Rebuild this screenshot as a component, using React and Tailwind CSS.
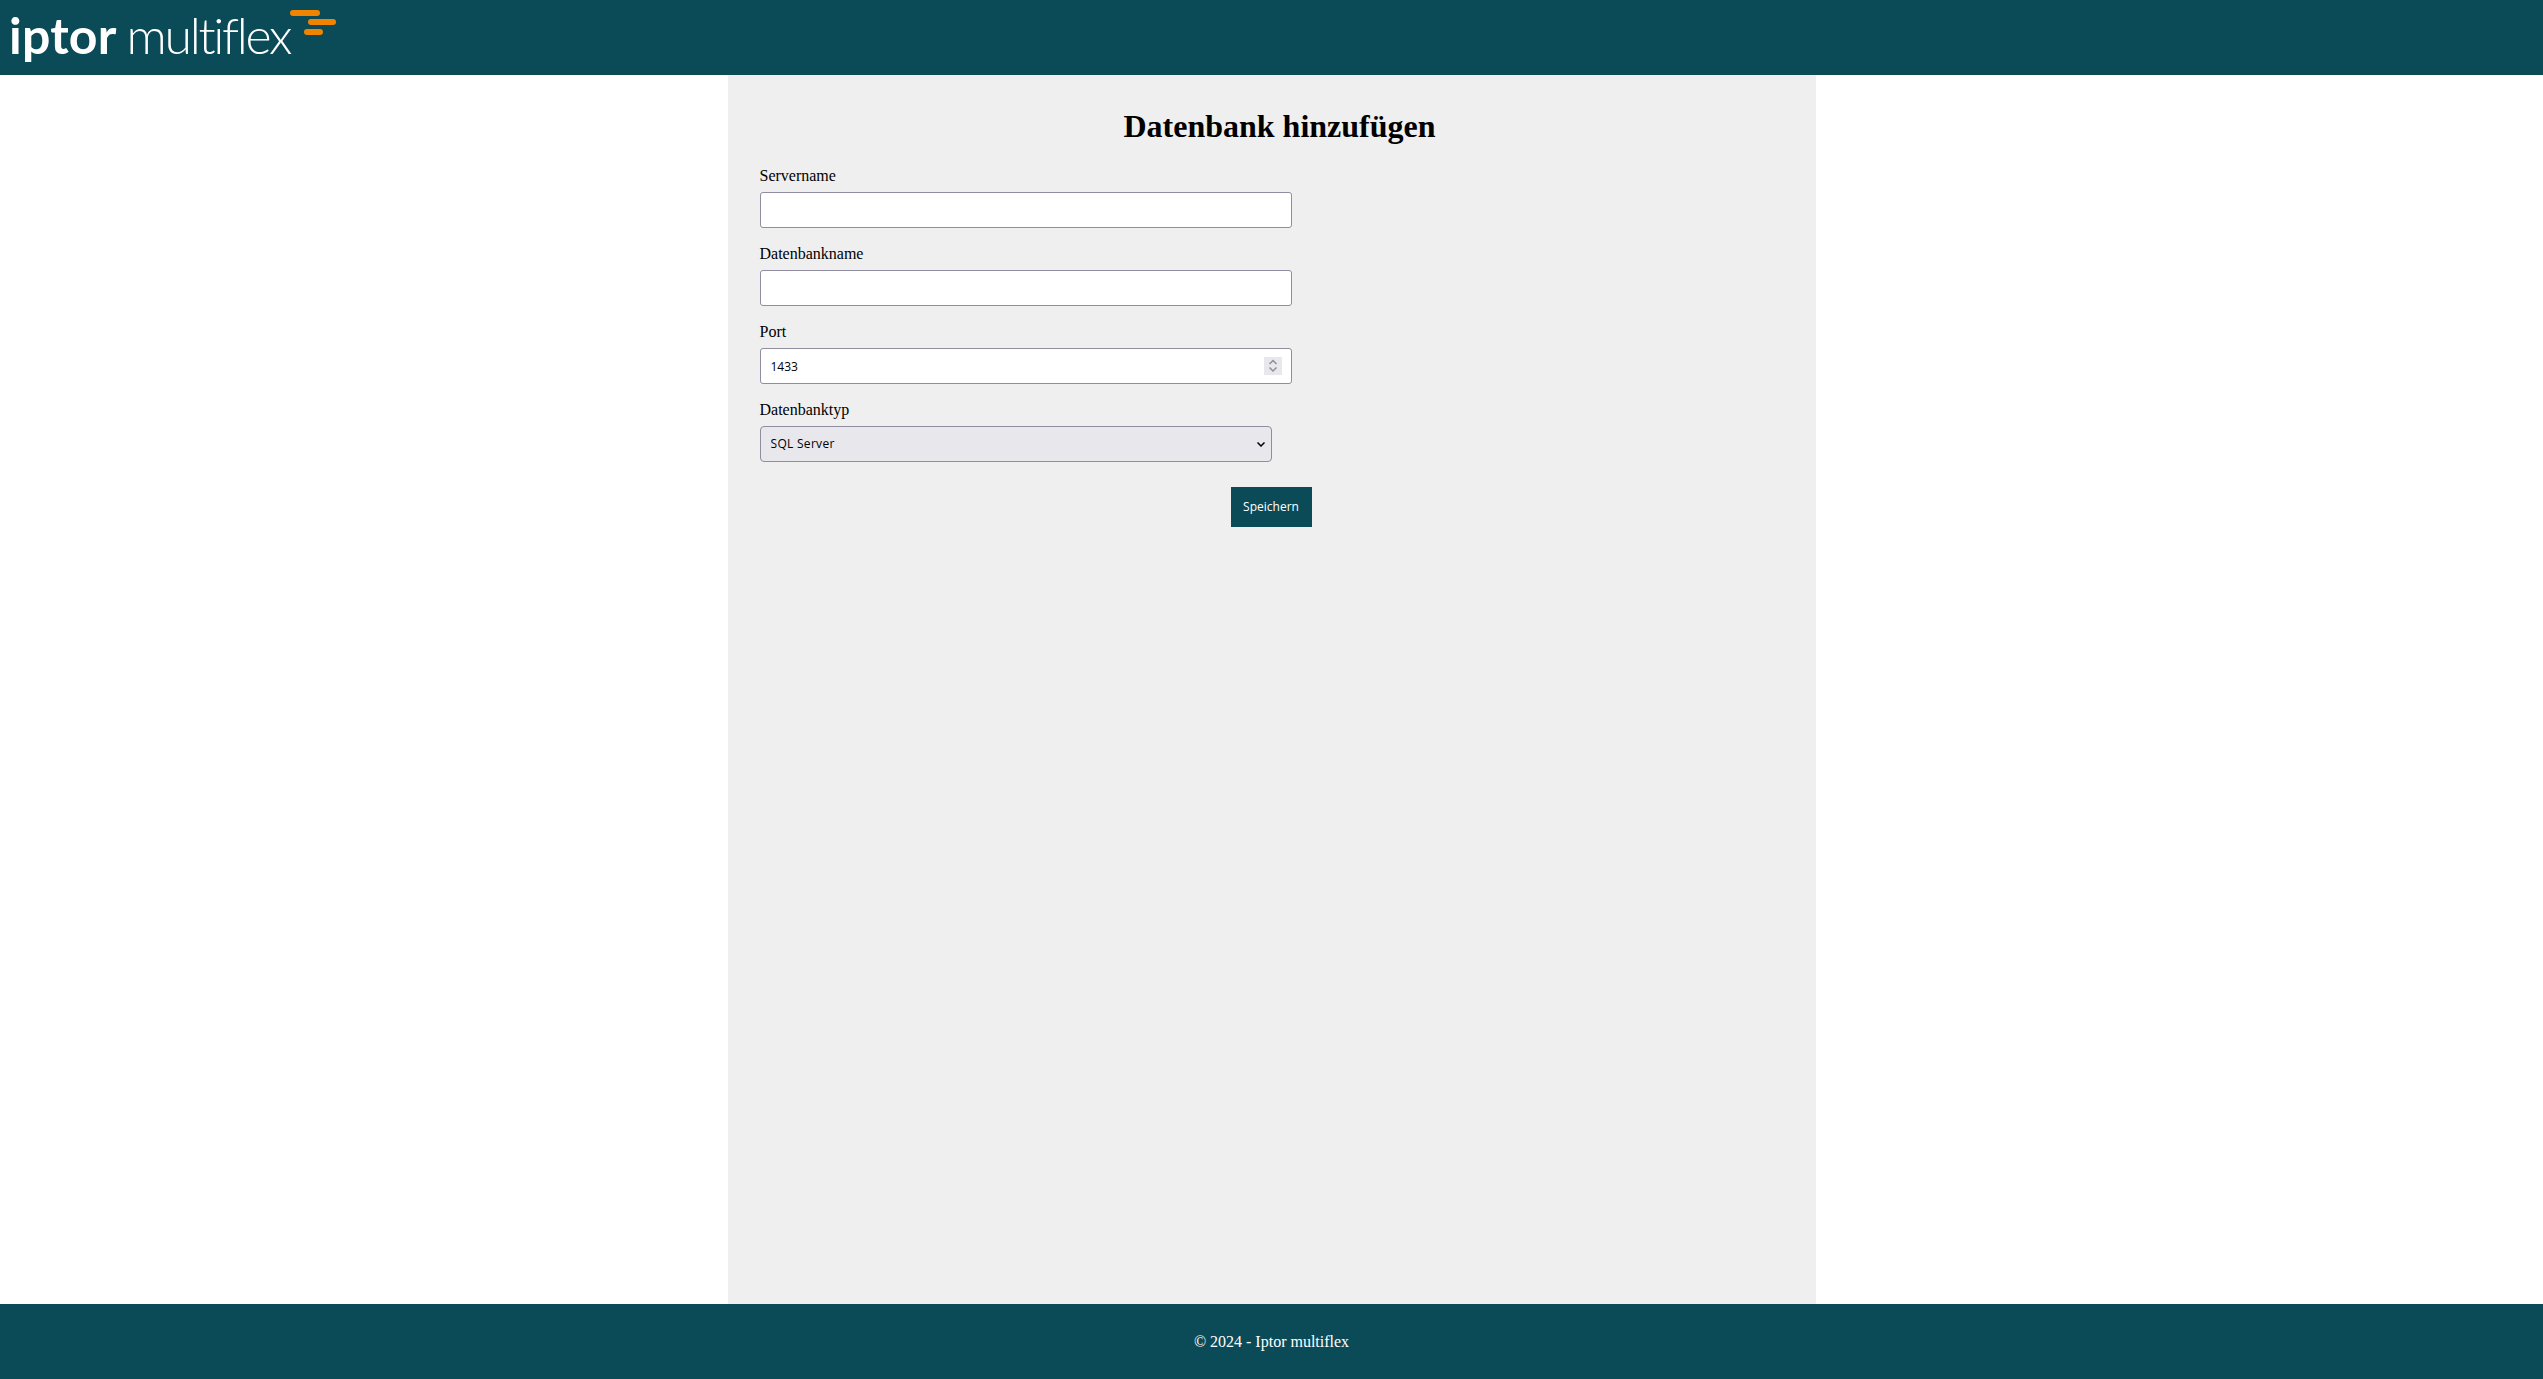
function Logo() {
  return (
    <div className="flex items-start h-full pl-[9px]">
      <span className="font-['Lato',sans-serif] font-bold text-white text-[50px] leading-[75px] mt-[-2px] tracking-[0.2px]">iptor</span>
      <span className="font-['Lato',sans-serif] font-light text-white text-[50px] leading-[75px] mt-[-2px] ml-[10px] tracking-[-2.3px]">multiflex</span>
      <svg className="w-[46px] h-[27px] mt-[9px] shrink-0" viewBox="0 0 46 27" fill="none" stroke="#f08400" strokeWidth="6" strokeLinecap="round">
        <path d="M3 4H27" />
        <path d="M21 13H43" />
        <path d="M17 23H30" />
      </svg>
    </div>
  );
}

function Field({ label, children }) {
  return (
    <div className="mb-[17px]">
      <label className="block text-base leading-[18px] mb-[7px]">{label}</label>
      {children}
    </div>
  );
}

const inputClass = "block w-[532px] h-[36px] px-[10px] bg-white border border-[#8f8d9f] rounded-[3px] text-[12px] text-black font-['Open_Sans',sans-serif] outline-none";

export default function App() {
  return (
    <div className="h-[1379px] flex flex-col bg-white text-black font-['Liberation_Serif',serif]">
      <header className="h-[75px] bg-[#0b4b57] shrink-0">
        <Logo />
      </header>

      <main className="flex-1 flex justify-center">
        <div className="w-[1088px] bg-[#efefef] pl-8 pr-4">
          <h1 className="text-center text-[32px] font-bold leading-[36px] mt-[33px] mb-[23px]">Datenbank hinzufügen</h1>
          <form className="w-[552px]">
            <Field label="Servername">
              <input type="text" className={inputClass} />
            </Field>
            <Field label="Datenbankname">
              <input type="text" className={inputClass} />
            </Field>
            <Field label="Port">
              <div className="relative w-[532px]">
                <input type="text" defaultValue="1433" className={inputClass} />
                <svg className="absolute right-[10px] top-[9px] w-[18px] h-[18px] bg-[#e8e7ec]" viewBox="0 0 18 18" fill="none" stroke="#8f8d9f" strokeWidth="1.5">
                  <path d="M5.5 7L9 3.5L12.5 7" />
                  <path d="M5.5 10.5L9 14L12.5 10.5" />
                </svg>
              </div>
            </Field>
            <Field label="Datenbanktyp">
              <div className="relative w-[512px]">
                <select className="block w-full h-[36px] px-[10px] appearance-none bg-[#e8e7ec] border border-[#8f8d9f] rounded-[4px] text-[12px] tracking-[0.3px] text-black font-['Open_Sans',sans-serif] outline-none">
                  <option>SQL Server</option>
                </select>
                <svg className="absolute right-[7px] top-[16px] w-[8px] h-[5px] pointer-events-none" viewBox="0 0 8 5" fill="none" stroke="#000" strokeWidth="1.5">
                  <path d="M0.5 0.5L4 4L7.5 0.5" />
                </svg>
              </div>
            </Field>
            <div className="flex justify-end mt-[25px]">
              <button type="button" className="w-[81px] h-[40px] bg-[#0b4b57] text-white text-[12px] font-['Open_Sans',sans-serif]">Speichern</button>
            </div>
          </form>
        </div>
      </main>

      <footer className="h-[75px] bg-[#0b4b57] shrink-0 flex items-center justify-center text-white text-base">
        © 2024 - Iptor multiflex
      </footer>
    </div>
  );
}
